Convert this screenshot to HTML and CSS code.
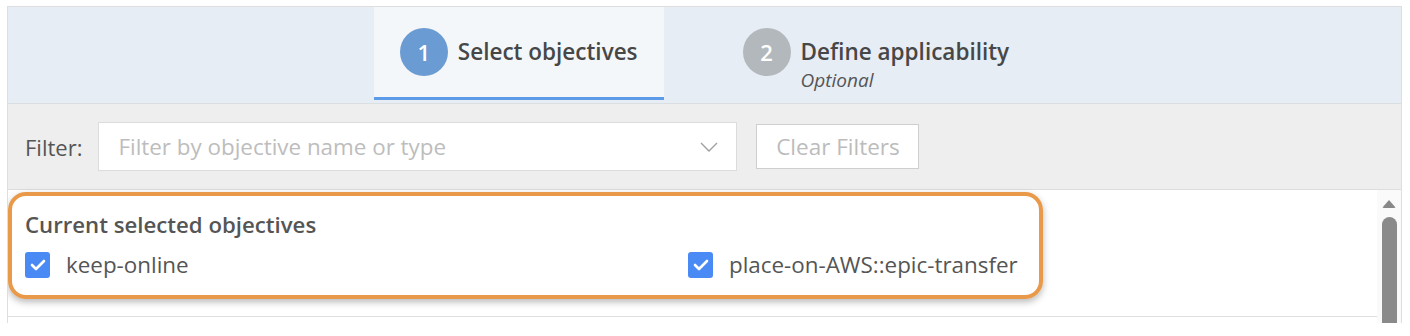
FILE: index.html
```html
<!DOCTYPE html>
<html>
<head>
<meta charset="utf-8">
<link rel="stylesheet" href="styles.css">
</head>
<body>
<div class="frame">
  <div class="steps">
    <div class="step active">
      <span class="num">1</span>
      <div class="step-text"><div class="step-title">Select objectives</div></div>
    </div>
    <div class="step">
      <span class="num">2</span>
      <div class="step-text"><div class="step-title">Define applicability</div><div class="step-sub">Optional</div></div>
    </div>
  </div>
  <div class="filterbar">
    <span class="filter-label">Filter:</span>
    <div class="select">
      <span class="placeholder">Filter by objective name or type</span>
      <svg class="chev" width="18" height="10" viewBox="0 0 18 10"><path d="M1 1 L9 9 L17 1" fill="none" stroke="#a0a0a0" stroke-width="1.4"/></svg>
    </div>
    <button class="clear">Clear Filters</button>
  </div>
  <div class="content">
    <div class="list">
      <div class="group">
        <div class="group-title">Current selected objectives</div>
        <div class="items">
          <label class="item"><span class="cb"><svg width="16" height="12" viewBox="0 0 16 12"><path d="M2 6 L6 10 L14 2" fill="none" stroke="#fff" stroke-width="2.6" stroke-linecap="round" stroke-linejoin="round"/></svg></span>keep-online</label>
          <label class="item"><span class="cb"><svg width="16" height="12" viewBox="0 0 16 12"><path d="M2 6 L6 10 L14 2" fill="none" stroke="#fff" stroke-width="2.6" stroke-linecap="round" stroke-linejoin="round"/></svg></span>place-on-AWS::epic-transfer</label>
        </div>
      </div>
    </div>
    <div class="scrollbar">
      <span class="arrow"></span>
      <span class="thumb"></span>
    </div>
    <div class="highlight"></div>
  </div>
</div>
</body>
</html>
```
FILE: styles.css
```css
html, body {
  margin: 0;
  padding: 0;
  background: #ffffff;
}
body {
  font-family: "Open Sans", "Liberation Sans", sans-serif;
  color: #4a4a4a;
}
.frame {
  box-sizing: border-box;
  margin: 6px 0 0 7px;
  width: 1395px;
  height: 317px;
  border: 1px solid #dedede;
  border-bottom: none;
  overflow: hidden;
  display: flex;
  flex-direction: column;
}
.steps {
  height: 96px;
  flex: none;
  background: #e6edf5;
  border-bottom: 1px solid #dcdfe2;
  display: flex;
  justify-content: center;
  gap: 53px;
}
.step {
  box-sizing: border-box;
  height: 93px;
  padding: 21px 26px 0 26px;
  display: flex;
  align-items: flex-start;
  gap: 10px;
  border-bottom: 3px solid transparent;
}
.step.active {
  background: #f4f7fa;
  border-bottom-color: #5b9be8;
}
.num {
  width: 48px;
  height: 48px;
  border-radius: 50%;
  background: #b3b8bc;
  color: #ffffff;
  font-size: 22px;
  font-weight: 600;
  display: flex;
  align-items: center;
  justify-content: center;
  flex: none;
}
.active .num {
  background: #6a9bd3;
}
.step-title {
  font-size: 22.5px;
  font-weight: 600;
  line-height: 48px;
  color: #474747;
  white-space: nowrap;
}
.step-sub {
  font-size: 19px;
  font-style: italic;
  line-height: 22px;
  margin-top: -7px;
  color: #555555;
}
.filterbar {
  height: 86px;
  flex: none;
  box-sizing: border-box;
  background: #eeeeee;
  border-bottom: 1px solid #dddddd;
  display: flex;
  align-items: center;
  padding: 0 0 0 17px;
}
.filter-label {
  font-size: 22px;
  color: #555555;
  margin-right: 16px;
}
.select {
  box-sizing: border-box;
  width: 639px;
  height: 49px;
  background: #ffffff;
  border: 1px solid #dcdcdc;
  display: flex;
  align-items: center;
  justify-content: space-between;
  padding: 0 18px 0 19px;
}
.placeholder {
  font-size: 22.4px;
  color: #bdbdbd;
}
.clear {
  box-sizing: border-box;
  margin-left: 19px;
  width: 163px;
  height: 45px;
  background: #ffffff;
  border: 1px solid #cfcfcf;
  font-family: "Open Sans", "Liberation Sans", sans-serif;
  font-size: 22.5px;
  color: #bcbcbc;
  padding: 0;
}
.content {
  position: relative;
  flex: 1;
  display: flex;
}
.list {
  flex: 1;
}
.group {
  height: 127px;
  box-sizing: border-box;
  border-bottom: 1px solid #dedede;
  padding: 21px 25px 0 17px;
}
.group-title {
  font-size: 22.2px;
  font-weight: 600;
  line-height: 28px;
  color: #555555;
}
.items {
  margin-top: 13px;
  display: grid;
  grid-template-columns: 663px 1fr;
}
.item {
  display: flex;
  align-items: center;
  gap: 16px;
  font-size: 22.4px;
  color: #555555;
  line-height: 26px;
}
.cb {
  width: 25px;
  height: 26px;
  border-radius: 3px;
  background: #4a8af4;
  display: flex;
  align-items: center;
  justify-content: center;
}
.scrollbar {
  width: 24px;
  flex: none;
  background: #fafafa;
  display: flex;
  flex-direction: column;
  align-items: center;
  padding-top: 10px;
  box-sizing: border-box;
}
.arrow {
  width: 0;
  height: 0;
  border-left: 7px solid transparent;
  border-right: 7px solid transparent;
  border-bottom: 8px solid #888888;
  border-radius: 2px;
}
.thumb {
  margin-top: 9px;
  width: 15px;
  flex: 1;
  background: #8a8a8a;
  border-radius: 8px 8px 0 0;
}
.highlight {
  position: absolute;
  left: 0;
  top: 2px;
  width: 1035px;
  height: 107px;
  box-sizing: border-box;
  border: 4px solid #e8994a;
  border-radius: 18px;
  box-shadow: 0 3px 7px rgba(0, 0, 0, 0.28);
  pointer-events: none;
}
```
